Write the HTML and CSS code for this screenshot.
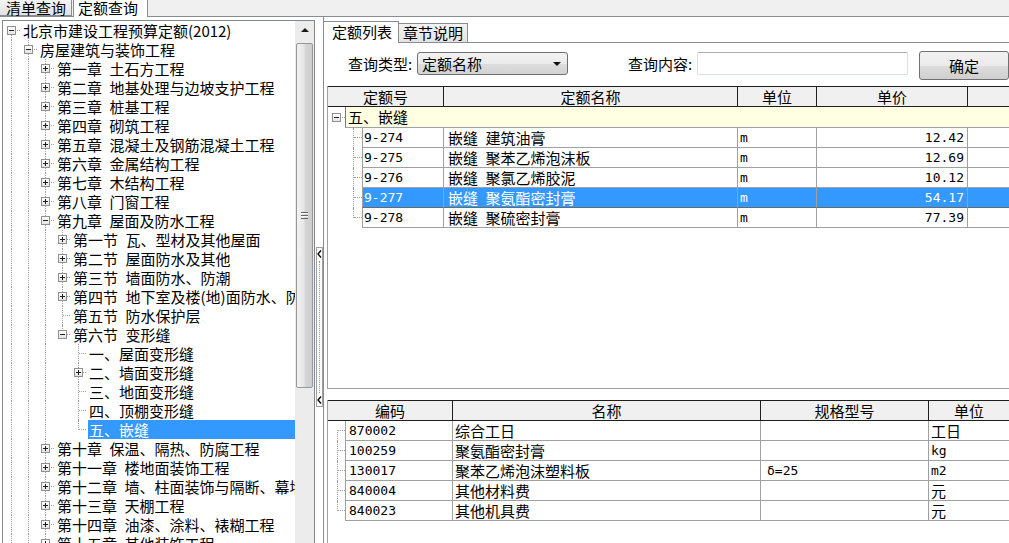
FILE: index.html
```html
<!DOCTYPE html>
<html lang="zh-CN">
<head>
<meta charset="utf-8">
<title>定额查询</title>
<link rel="stylesheet" href="styles.css">
</head>
<body>
<div class="app">
  <div class="topbar">
    <div class="ttab">清单查询</div>
    <div class="ttab on">定额查询</div>
  </div>
  <div class="main">
    <div class="left">
      <div class="treebox">
        <div class="tree">
          <div class="r"><b class="c n first"><i class="x"></i></b><span class="t">北京市建设工程预算定额(2012)</span></div>
          <div class="r"><b class="c v"></b><b class="c n"><i class="x"></i></b><span class="t">房屋建筑与装饰工程</span></div>
          <div class="r"><b class="c v"></b><b class="c v"></b><b class="c n"><i class="x p"></i></b><span class="t">第一章&ensp;土石方工程</span></div>
          <div class="r"><b class="c v"></b><b class="c v"></b><b class="c n"><i class="x p"></i></b><span class="t">第二章&ensp;地基处理与边坡支护工程</span></div>
          <div class="r"><b class="c v"></b><b class="c v"></b><b class="c n"><i class="x p"></i></b><span class="t">第三章&ensp;桩基工程</span></div>
          <div class="r"><b class="c v"></b><b class="c v"></b><b class="c n"><i class="x p"></i></b><span class="t">第四章&ensp;砌筑工程</span></div>
          <div class="r"><b class="c v"></b><b class="c v"></b><b class="c n"><i class="x p"></i></b><span class="t">第五章&ensp;混凝土及钢筋混凝土工程</span></div>
          <div class="r"><b class="c v"></b><b class="c v"></b><b class="c n"><i class="x p"></i></b><span class="t">第六章&ensp;金属结构工程</span></div>
          <div class="r"><b class="c v"></b><b class="c v"></b><b class="c n"><i class="x p"></i></b><span class="t">第七章&ensp;木结构工程</span></div>
          <div class="r"><b class="c v"></b><b class="c v"></b><b class="c n"><i class="x p"></i></b><span class="t">第八章&ensp;门窗工程</span></div>
          <div class="r"><b class="c v"></b><b class="c v"></b><b class="c n"><i class="x"></i></b><span class="t">第九章&ensp;屋面及防水工程</span></div>
          <div class="r"><b class="c v"></b><b class="c v"></b><b class="c v"></b><b class="c n"><i class="x p"></i></b><span class="t">第一节&ensp;瓦、型材及其他屋面</span></div>
          <div class="r"><b class="c v"></b><b class="c v"></b><b class="c v"></b><b class="c n"><i class="x p"></i></b><span class="t">第二节&ensp;屋面防水及其他</span></div>
          <div class="r"><b class="c v"></b><b class="c v"></b><b class="c v"></b><b class="c n"><i class="x p"></i></b><span class="t">第三节&ensp;墙面防水、防潮</span></div>
          <div class="r"><b class="c v"></b><b class="c v"></b><b class="c v"></b><b class="c n"><i class="x p"></i></b><span class="t">第四节&ensp;地下室及楼(地)面防水、防潮</span></div>
          <div class="r"><b class="c v"></b><b class="c v"></b><b class="c v"></b><b class="c n"></b><span class="t">第五节&ensp;防水保护层</span></div>
          <div class="r"><b class="c v"></b><b class="c v"></b><b class="c v"></b><b class="c n last"><i class="x"></i></b><span class="t">第六节&ensp;变形缝</span></div>
          <div class="r"><b class="c v"></b><b class="c v"></b><b class="c v"></b><b class="c"></b><b class="c n"></b><span class="t">一、屋面变形缝</span></div>
          <div class="r"><b class="c v"></b><b class="c v"></b><b class="c v"></b><b class="c"></b><b class="c n"><i class="x p"></i></b><span class="t">二、墙面变形缝</span></div>
          <div class="r"><b class="c v"></b><b class="c v"></b><b class="c v"></b><b class="c"></b><b class="c n"></b><span class="t">三、地面变形缝</span></div>
          <div class="r"><b class="c v"></b><b class="c v"></b><b class="c v"></b><b class="c"></b><b class="c n"></b><span class="t">四、顶棚变形缝</span></div>
          <div class="r"><b class="c v"></b><b class="c v"></b><b class="c v"></b><b class="c"></b><b class="c n last"></b><span class="t sel">五、嵌缝</span></div>
          <div class="r"><b class="c v"></b><b class="c v"></b><b class="c n"><i class="x p"></i></b><span class="t">第十章&ensp;保温、隔热、防腐工程</span></div>
          <div class="r"><b class="c v"></b><b class="c v"></b><b class="c n"><i class="x p"></i></b><span class="t">第十一章&ensp;楼地面装饰工程</span></div>
          <div class="r"><b class="c v"></b><b class="c v"></b><b class="c n"><i class="x p"></i></b><span class="t">第十二章&ensp;墙、柱面装饰与隔断、幕墙工程</span></div>
          <div class="r"><b class="c v"></b><b class="c v"></b><b class="c n"><i class="x p"></i></b><span class="t">第十三章&ensp;天棚工程</span></div>
          <div class="r"><b class="c v"></b><b class="c v"></b><b class="c n"><i class="x p"></i></b><span class="t">第十四章&ensp;油漆、涂料、裱糊工程</span></div>
          <div class="r"><b class="c v"></b><b class="c v"></b><b class="c n"><i class="x p"></i></b><span class="t">第十五章&ensp;其他装饰工程</span></div>
        </div>
        <div class="vs">
          <div class="vs-up"><span class="tri-up"></span></div>
          <div class="vs-thumb"><span class="grip"></span></div>
        </div>
      </div>
    </div>
    <div class="split">
      <div class="sbar">
        <svg class="chev" width="5" height="8" viewBox="0 0 5 8"><path d="M4 0.5 L1 4 L4 7.5" fill="none" stroke="#000" stroke-width="1.3"/></svg>
        <span class="sdots"></span>
        <svg class="chev" width="5" height="8" viewBox="0 0 5 8"><path d="M4 0.5 L1 4 L4 7.5" fill="none" stroke="#000" stroke-width="1.3"/></svg>
      </div>
    </div>
    <div class="right">
      <div class="itabs">
        <div class="itab on">定额列表</div>
        <div class="itab">章节说明</div>
        <div class="itab-rest"></div>
      </div>
      <div class="query">
        <span class="lbl">查询类型:</span>
        <div class="combo"><span class="combo-t">定额名称</span><span class="tri-down"></span></div>
        <span class="lbl lbl2">查询内容:</span>
        <div class="input"></div>
        <div class="btn">确定</div>
      </div>
      <div class="grid1">
        <div class="g1h"><span>定额号</span><span>定额名称</span><span>单位</span><span>单价</span><span></span></div>
        <div class="g1grp"><b class="gt"><i class="x"></i></b><span class="grp">五、嵌缝</span></div>
        <div class="g1r"><b class="tc"></b><span class="code mono">9-274</span><span class="nm">嵌缝&ensp;建筑油膏</span><span class="un mono">m</span><span class="num mono">12.42</span><span></span></div>
        <div class="g1r"><b class="tc"></b><span class="code mono">9-275</span><span class="nm">嵌缝&ensp;聚苯乙烯泡沫板</span><span class="un mono">m</span><span class="num mono">12.69</span><span></span></div>
        <div class="g1r"><b class="tc"></b><span class="code mono">9-276</span><span class="nm">嵌缝&ensp;聚氯乙烯胶泥</span><span class="un mono">m</span><span class="num mono">10.12</span><span></span></div>
        <div class="g1r sel"><b class="tc"></b><span class="code mono">9-277</span><span class="nm">嵌缝&ensp;聚氨酯密封膏</span><span class="un mono">m</span><span class="num mono">54.17</span><span></span></div>
        <div class="g1r"><b class="tc last"></b><span class="code mono">9-278</span><span class="nm">嵌缝&ensp;聚硫密封膏</span><span class="un mono">m</span><span class="num mono">77.39</span><span></span></div>
      </div>
      <div class="grid2">
        <div class="g2h"><span>编码</span><span>名称</span><span>规格型号</span><span>单位</span></div>
        <div class="g2r"><b class="tc first"></b><span class="code mono">870002</span><span class="nm">综合工日</span><span class="sp"></span><span class="un">工日</span></div>
        <div class="g2r"><b class="tc"></b><span class="code mono">100259</span><span class="nm">聚氨酯密封膏</span><span class="sp"></span><span class="un mono">kg</span></div>
        <div class="g2r"><b class="tc"></b><span class="code mono">130017</span><span class="nm">聚苯乙烯泡沫塑料板</span><span class="sp mono">δ=25</span><span class="un mono">m2</span></div>
        <div class="g2r"><b class="tc"></b><span class="code mono">840004</span><span class="nm">其他材料费</span><span class="sp"></span><span class="un">元</span></div>
        <div class="g2r"><b class="tc last"></b><span class="code mono">840023</span><span class="nm">其他机具费</span><span class="sp"></span><span class="un">元</span></div>
      </div>
    </div>
  </div>
</div>
</body>
</html>
```

FILE: styles.css
```css
* { box-sizing: border-box; margin: 0; padding: 0; }
html, body { width: 1009px; height: 543px; overflow: hidden; }
body {
  margin: 0;
  background: #fff;
  color: #000;
  font-family: "Noto Sans CJK SC", "Noto Sans", sans-serif;
  font-size: 15px;
}
b, i { font-weight: normal; font-style: normal; display: block; }

.app { width: 1009px; height: 543px; overflow: hidden; display: flex; flex-direction: column; }

/* top tab bar */
.topbar {
  height: 17px; flex: none; display: flex; align-items: flex-start;
  background: #f0f0f0; border-bottom: 1px solid #898c95;
}
.ttab {
  width: 72px; height: 16px; line-height: 15px; padding-left: 6px;
  background: linear-gradient(#f4f4f4, #e2e2e2);
  border-right: 1px solid #898c95; border-bottom: 1px solid #898c95;
  white-space: nowrap; flex: none;
}
.ttab.on {
  margin-left: 1px; width: 75px; height: 17px; padding-left: 4px;
  background: #fff; border-left: 1px solid #898c95; border-bottom: none;
}

.main { flex: 1; min-height: 0; display: flex; }

/* left tree */
.left { width: 315px; flex: none; padding: 3px 0 0 2px; }
.treebox {
  width: 313px; height: 540px; border: 1px solid #828790;
  display: flex; overflow: hidden; background: #fff;
}
.tree { flex: 1; min-width: 0; overflow: hidden; }
.r { display: flex; height: 19px; white-space: nowrap; }
.c { flex: none; width: 17px; height: 19px; position: relative; }
.r > .c:nth-child(4), .r > .c:nth-child(5) { width: 16px; }
.c.v::before, .n::before {
  content: ""; position: absolute; left: 8px; top: 0; bottom: 0;
  border-left: 1px dotted #a0a0a0;
}
.n.last::before { bottom: auto; height: 10px; }
.n.first::before { top: 9px; }
.n::after {
  content: ""; position: absolute; left: 9px; right: 0; top: 9px;
  border-top: 1px dotted #a0a0a0;
}
.x {
  position: absolute; left: 4px; top: 5px; width: 9px; height: 9px; z-index: 1;
  border: 1px solid #919191; background: linear-gradient(#ffffff, #e4e4e4);
}
.x::before {
  content: ""; position: absolute; left: 1px; top: 3px; width: 5px; height: 1px; background: #1e1e1e;
}
.x.p::after {
  content: ""; position: absolute; left: 3px; top: 1px; width: 1px; height: 5px; background: #1e1e1e;
}
.t { flex: 1; min-width: 0; overflow: hidden; margin-left: 2px; padding-left: 1px; line-height: 19px; }
.t.sel { background: #3399ff; color: #fff; }

/* scrollbar */
.vs {
  width: 19px; flex: none; background: #ececec;
  display: flex; flex-direction: column; align-items: center;
}
.vs-up { height: 18px; width: 17px; display: flex; align-items: center; justify-content: center; }
.tri-up {
  width: 0; height: 0; border-left: 4px solid transparent; border-right: 4px solid transparent;
  border-bottom: 4px solid #1a1a1a;
}
.vs-thumb {
  margin-top: 4px; width: 17px; height: 345px; border: 1px solid #979797; border-radius: 2px;
  background: linear-gradient(90deg, #f3f3f3, #e6e6e6 45%, #d6d6d6 55%, #cdcdcd);
  display: flex; align-items: center; justify-content: center;
}
.grip {
  width: 7px; height: 7px;
  background: repeating-linear-gradient(#666 0 1px, #fafafa 1px 2px, transparent 2px 3px);
}

/* splitter */
.split { width: 8px; flex: none; }
.sbar {
  margin: 230px 0 0 1px; width: 7px; height: 160px; border: 1px solid #a0a0a0;
  background: #fbfbfb; padding: 2px 0;
  display: flex; flex-direction: column; align-items: center;
}
.chev { display: block; flex: none; }
.sdots { flex: 1; border-left: 1px dotted #6f9fd6; margin: 3px 0; }

/* right */
.right { flex: 1; min-width: 0; border-left: 1px solid #898c95; display: flex; flex-direction: column; }
.itabs { height: 26px; flex: none; display: flex; align-items: flex-end; padding-top: 4px; }
.itab {
  width: 69px; height: 20px; line-height: 18px; padding-left: 4px; flex: none;
  background: linear-gradient(#f3f3f3, #e3e3e3);
  border: 1px solid #898c95; border-left: none; white-space: nowrap;
}
.itab.on { width: 75px; height: 22px; line-height: 20px; padding-left: 8px; background: #fff; border-bottom: none; }
.itab-rest { flex: 1; height: 1px; border-bottom: 1px solid #898c95; }

.query { height: 43px; flex: none; display: flex; align-items: flex-start; padding: 9px 0 0 24px; }
.lbl { width: 69px; flex: none; line-height: 23px; white-space: nowrap; }
.lbl2 { margin-left: 60px; }
.combo {
  width: 151px; height: 23px; flex: none; border: 1px solid #707070; border-radius: 3px;
  background: linear-gradient(#f2f2f2, #ebebeb 50%, #dddddd 51%, #d3d3d3);
  display: flex; align-items: center; padding: 0 6px 0 4px;
}
.combo-t { flex: 1; line-height: 21px; }
.tri-down {
  width: 0; height: 0; border-left: 4px solid transparent; border-right: 4px solid transparent;
  border-top: 4px solid #111;
}
.input {
  width: 211px; height: 23px; flex: none; background: #fff;
  border: 1px solid #dbdfe6; border-top-color: #abadb3; border-radius: 2px;
}
.btn {
  margin: -1px 0 0 11px; width: 90px; height: 29px; flex: none;
  border: 1px solid #707070; border-radius: 3px;
  background: linear-gradient(#f2f2f2, #ebebeb 50%, #dddddd 51%, #cfcfcf);
  text-align: center; line-height: 27px;
}

.mono { font-family: "DejaVu Sans Mono", "Liberation Mono", monospace; font-size: 13px; }

/* grid 1 */
.grid1 {
  margin-left: 3px; height: 303px; flex: none; overflow: hidden;
  border-left: 1px solid #a0a0a0; border-bottom: 1px solid #a0a0a0;
}
.g1h, .g2h {
  display: grid; height: 21px; background: #f0f0f0;
  border-top: 1px solid #1e1e1e; border-bottom: 1px solid #1e1e1e;
}
.g1h { grid-template-columns: 116px 294px 79px 151px 1fr; }
.g2h { grid-template-columns: 125px 308px 168px 1fr; }
.g1h span, .g2h span { border-right: 1px solid #1e1e1e; text-align: center; line-height: 19px; white-space: nowrap; }
.g1h span:last-child, .g2h span:last-child { border-right: none; }

.g1grp { display: flex; height: 21px; }
.gt { width: 17px; flex: none; position: relative; }
.gt::after { content: ""; position: absolute; left: 9px; right: 0; top: 10px; border-top: 1px dotted #a0a0a0; }
.gt .x { top: 6px; }
.grp {
  flex: 1; background: #ffffe1; border-left: 1px solid #7a7a7a; border-bottom: 1px solid #a0a0a0;
  padding-left: 2px; line-height: 20px;
}

.g1r { display: grid; grid-template-columns: 34px 82px 294px 79px 151px 1fr; height: 20px; }
.g2r { display: grid; grid-template-columns: 17px 108px 308px 168px 1fr; height: 20px; }
.g1r > span, .g2r > span {
  border-right: 1px solid #a0a0a0; border-bottom: 1px solid #a0a0a0;
  line-height: 19px; white-space: nowrap; overflow: hidden;
}
.g1r > span:last-child, .g2r > span:last-child { border-right: none; }
.g1r .code { border-left: 1px solid #a0a0a0; padding-left: 1px; }
.g1r .nm { padding-left: 4px; }
.g1r .un { padding-left: 2px; }
.g1r .num { text-align: right; padding-right: 3px; }
.g1r.sel > span { background: #3399ff; color: #fff; border-bottom-color: #6a6a6a; }

.tc { position: relative; height: 20px; }
.tc::before { content: ""; position: absolute; top: 0; bottom: 0; border-left: 1px dotted #a0a0a0; }
.tc::after { content: ""; position: absolute; right: 0; top: 9px; border-top: 1px dotted #a0a0a0; }
.g1r .tc::before { left: 25px; }
.g1r .tc::after { left: 26px; }
.g2r .tc::before { left: 9px; }
.g2r .tc::after { left: 10px; }
.tc.last::before { bottom: auto; height: 10px; }
.tc.first::before { top: 9px; }

.grid2 { margin: 11px 0 0 3px; flex: 1; min-height: 0; border-left: 1px solid #a0a0a0; }
.g2r .code { border-left: 1px solid #a0a0a0; padding-left: 3px; }
.g2r .nm { padding-left: 2px; }
.g2r .sp { padding-left: 6px; }
.g2r .un { padding-left: 2px; }
```
